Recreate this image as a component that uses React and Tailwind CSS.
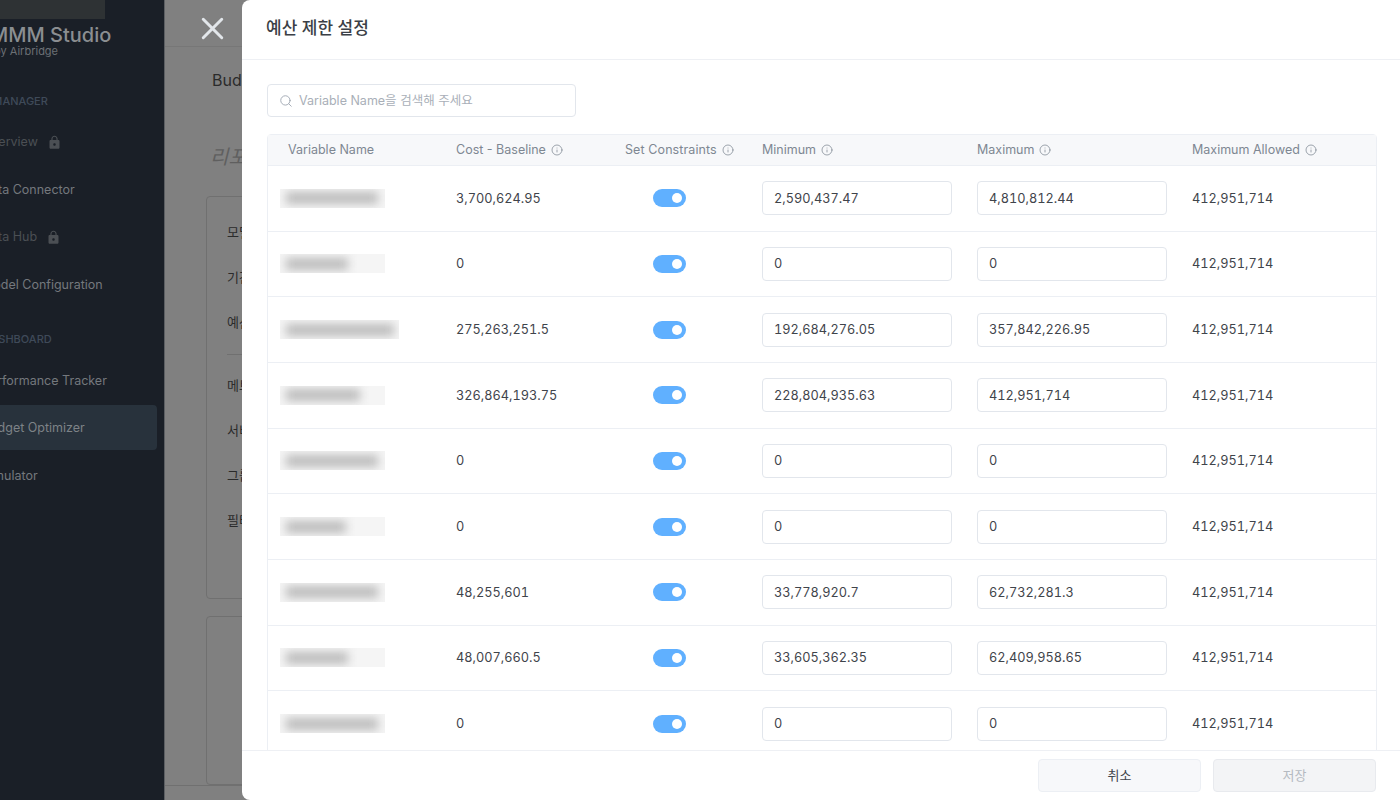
import React from "react";
import { Info, Search, X } from "lucide-react";
import { MdLock } from "react-icons/md";

const rows = [
  { blur: "w-[92px]", box: "w-[105px]", cost: "3,700,624.95", min: "2,590,437.47", max: "4,810,812.44" },
  { blur: "w-[62px]", box: "w-[105px]", cost: "0", min: "0", max: "0" },
  { blur: "w-[108px]", box: "w-[119px]", cost: "275,263,251.5", min: "192,684,276.05", max: "357,842,226.95" },
  { blur: "w-[74px]", box: "w-[105px]", cost: "326,864,193.75", min: "228,804,935.63", max: "412,951,714" },
  { blur: "w-[92px]", box: "w-[105px]", cost: "0", min: "0", max: "0" },
  { blur: "w-[60px]", box: "w-[105px]", cost: "0", min: "0", max: "0" },
  { blur: "w-[92px]", box: "w-[105px]", cost: "48,255,601", min: "33,778,920.7", max: "62,732,281.3" },
  { blur: "w-[62px]", box: "w-[105px]", cost: "48,007,660.5", min: "33,605,362.35", max: "62,409,958.65" },
  { blur: "w-[92px]", box: "w-[105px]", cost: "0", min: "0", max: "0" },
];

const gridCols = "grid grid-cols-[176px_169px_137px_215px_215px_1fr]";

const NavItem = ({ label, locked, active }) => (
  <div
    className={`flex items-center gap-[9px] h-[45px] w-[209px] rounded pl-[34px] text-[12.5px] ${
      active ? "bg-[#28323c] text-[#7d8287]" : locked ? "text-[#4b4f54]" : "text-[#74787d]"
    }`}
  >
    {label}
    {locked && <MdLock size={15} />}
  </div>
);

const HeaderCell = ({ label, className = "" }) => (
  <div className={`flex items-center gap-[5px] pl-3 ${className}`}>
    {label}
    <Info size={12} strokeWidth={1.5} />
  </div>
);

const App = () => {
  return (
    <div
      className="relative flex w-[1400px] h-[800px] overflow-hidden bg-[#808080]"
      style={{ fontFamily: "Inter, 'Noto Sans CJK KR', sans-serif" }}
    >
      <aside className="w-[165px] shrink-0 bg-[#1a1f27] border-r border-[#5c5f63] overflow-hidden">
        <div className="h-[19px] w-[105px] bg-[#2e3234]"></div>
        <div className="-ml-[52px] w-[216px]">
          <div className="mt-[5px] pl-[42px] text-[20px] leading-[22px] font-medium text-[#8b8e91]">
            MMM Studio
          </div>
          <div className="pl-[46px] text-[11px] leading-[10px] text-[#6c7075]">by Airbridge</div>
          <div className="mt-[38px] pl-[13px] text-[11px] leading-[14px] font-medium text-[#3f4a59]">
            DATA MANAGER
          </div>
          <div className="mt-[12px] flex flex-col gap-[2.5px]">
            <NavItem label="Overview" locked />
            <NavItem label="Data Connector" />
            <NavItem label="Data Hub" locked />
            <NavItem label="Model Configuration" />
          </div>
          <div className="mt-[24px] pl-[35px] text-[11px] leading-[14px] font-medium text-[#3f4a59]">
            DASHBOARD
          </div>
          <div className="mt-[12px] flex flex-col gap-[2.5px] [&>div]:pt-[2px]">
            <NavItem label="Performance Tracker" />
            <NavItem label="Budget Optimizer" active />
            <NavItem label="Simulator" />
          </div>
        </div>
      </aside>

      <main className="flex-1 flex flex-col min-w-0 overflow-hidden">
        <div className="h-[47px] shrink-0 border-b border-[#777]"></div>
        <div className="flex-1 flex flex-col pl-[41px]">
          <div className="mt-[21px] pl-[6px] text-[16px] text-[#2b2b2b]">Budget Optimizer</div>
          <div className="mt-[50px] pl-[4px] text-[20px] italic text-[#5f5f5f]">리포트</div>
          <div className="mt-[24px] h-[403px] border border-[#707070] rounded-sm pl-5 pt-[26px] text-[13px] text-[#2b2b2b] flex flex-col gap-[25.5px]">
            <div>모델</div>
            <div>기간</div>
            <div>예산</div>
            <div className="h-px bg-[#707070] -my-[4.5px]"></div>
            <div>메트릭</div>
            <div>서비스</div>
            <div>그룹</div>
            <div>필터</div>
          </div>
          <div className="mt-[17px] flex-1 border border-[#707070] rounded-sm"></div>
        </div>
        <div className="h-[15px] shrink-0 border-t border-[#707070]"></div>
      </main>

      <X size={37} strokeWidth={1.9} className="absolute left-[194px] top-[10px] text-[#e2e6ea]" />

      <section className="absolute left-[242px] right-0 inset-y-0 flex flex-col bg-white rounded-l-lg">
        <header className="h-[60px] shrink-0 flex items-center pl-6 pb-[1px] border-b border-[#eef0f4] text-[17px] font-medium text-[#3b3f46]">
          예산 제한 설정
        </header>

        <div className="flex-1 min-h-0 overflow-hidden pt-6 pl-[25px] pr-[23px]">
          <div className="flex items-center gap-[6px] w-[309px] h-[33px] pt-px pl-[11px] border border-[#e2e6ec] rounded text-[12.5px] text-[#a9afb8]">
            <Search size={14} strokeWidth={1.5} className="text-[#9aa2ae]" />
            Variable Name을 검색해 주세요
          </div>

          <div className="mt-[17px] border border-[#eceff4] rounded-t">
            <div className={`${gridCols} h-[31px] items-center bg-[#f7f8fa] border-b border-[#eceff4] text-[12.5px] text-[#7e8792]`}>
              <div className="pl-[20px]">Variable Name</div>
              <HeaderCell label="Cost - Baseline" />
              <HeaderCell label="Set Constraints" className="tracking-[0.1px]" />
              <HeaderCell label="Minimum" />
              <HeaderCell label="Maximum" />
              <HeaderCell label="Maximum Allowed" />
            </div>
            {rows.map((row, i) => (
              <div key={i} className={`${gridCols} h-[65.67px] items-center border-b border-[#eceff4] text-[12.75px] tabular-nums text-[#3f444b]`}>
                <div className="pl-3">
                  <div className={`flex items-center h-[19px] pl-[6px] overflow-hidden bg-[#f5f5f5] ${row.box}`}>
                    <div className={`h-[12px] bg-[#bcbcbc] blur-[5px] ${row.blur}`}></div>
                  </div>
                </div>
                <div className="pl-3">{row.cost}</div>
                <div className="pl-[40px]">
                  <div className="flex items-center justify-end w-[33px] h-[18px] pr-1 rounded-full bg-[#60b0ff]">
                    <div className="size-[10px] rounded-full bg-white"></div>
                  </div>
                </div>
                <div className="pl-3">
                  <div className="flex items-center w-[190px] h-[34px] pl-[11px] border border-[#e2e6ec] rounded-sm">{row.min}</div>
                </div>
                <div className="pl-3">
                  <div className="flex items-center w-[190px] h-[34px] pl-[11px] border border-[#e2e6ec] rounded-sm">{row.max}</div>
                </div>
                <div className="pl-3">412,951,714</div>
              </div>
            ))}
          </div>
        </div>

        <footer className="h-[50px] shrink-0 flex justify-end gap-[12px] pt-2 pr-6 border-t border-[#eef0f4] text-[13px]">
          <button className="w-[163px] h-[33px] rounded bg-[#f7f8fa] border border-[#eceff4] text-[#3f444b]">취소</button>
          <button className="w-[163px] h-[33px] rounded bg-[#f3f4f6] border border-[#e8eaee] text-[#b5bac1]">저장</button>
        </footer>
      </section>
    </div>
  );
};

export default App;
